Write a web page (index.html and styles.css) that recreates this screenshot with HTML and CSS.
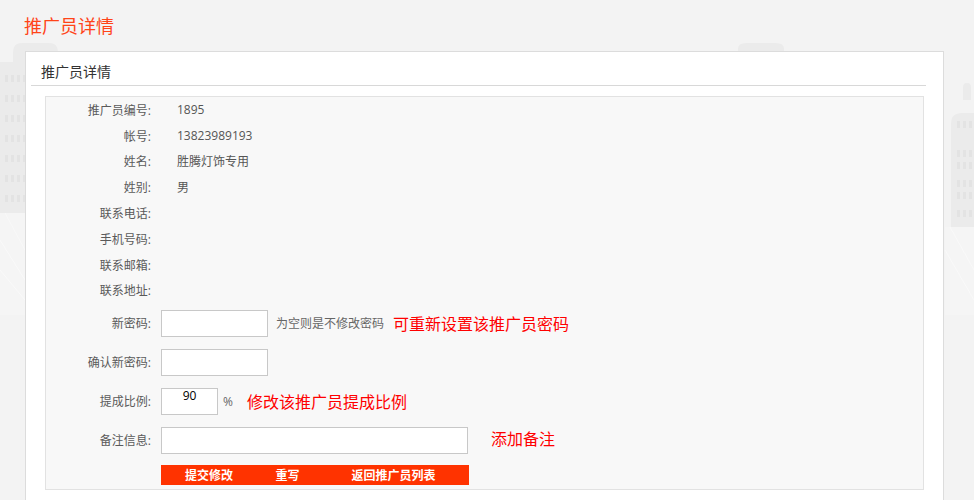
FILE: index.html
```html
<!DOCTYPE html>
<html lang="zh-CN">
<head>
<meta charset="utf-8">
<title>推广员详情</title>
<link rel="stylesheet" href="styles.css">
</head>
<body>
<svg class="bg" width="974" height="500" viewBox="0 0 974 500" aria-hidden="true">
  <g fill="#f5f5f5">
    <path d="M0 213 L60 213 L60 315 L0 315 Z"/>
    <path d="M945 227 L974 227 L974 315 L945 315 Z"/>
  </g>
  <g stroke="#f9f9f9" stroke-width="1" fill="none">
    <path d="M0 240 L25 280 M0 270 L25 300 M5 213 L25 250"/>
    <path d="M945 250 L974 300 M950 227 L974 270"/>
  </g>
  <g fill="#ebebeb">
    <path d="M13 62 L13 52 Q13 43 22 43 L49 43 Q58 43 58 52 L58 62 Z"/>
    <path d="M0 62 L30 62 L30 213 L0 213 Z"/>
    <path d="M738 51 L738 49 Q738 43 746 43 L776 43 Q784 43 784 49 L784 51 Z"/>
    <path d="M963 100 L963 87 Q963 83 967 83 Q971 83 971 87 L971 100 Z"/>
    <path d="M951 227 L951 124 Q951 113 962 113 L974 113 L974 227 Z"/>
  </g>
  <g fill="#e3e3e3">
    <rect x="5" y="75" width="3" height="7"/><rect x="11" y="75" width="3" height="7"/><rect x="17" y="75" width="3" height="7"/><rect x="23" y="75" width="2" height="7"/>
    <rect x="5" y="95" width="3" height="7"/><rect x="11" y="95" width="3" height="7"/><rect x="17" y="95" width="3" height="7"/><rect x="23" y="95" width="2" height="7"/>
    <rect x="5" y="115" width="3" height="7"/><rect x="11" y="115" width="3" height="7"/><rect x="17" y="115" width="3" height="7"/><rect x="23" y="115" width="2" height="7"/>
    <rect x="5" y="135" width="3" height="7"/><rect x="11" y="135" width="3" height="7"/><rect x="17" y="135" width="3" height="7"/><rect x="23" y="135" width="2" height="7"/>
    <rect x="5" y="155" width="3" height="7"/><rect x="11" y="155" width="3" height="7"/><rect x="17" y="155" width="3" height="7"/><rect x="23" y="155" width="2" height="7"/>
    <rect x="5" y="175" width="3" height="7"/><rect x="11" y="175" width="3" height="7"/><rect x="17" y="175" width="3" height="7"/><rect x="23" y="175" width="2" height="7"/>
    <rect x="5" y="195" width="3" height="7"/><rect x="11" y="195" width="3" height="7"/><rect x="17" y="195" width="3" height="7"/><rect x="23" y="195" width="2" height="7"/>
    <rect x="957" y="121" width="3" height="7"/><rect x="963" y="121" width="3" height="7"/><rect x="969" y="121" width="3" height="7"/>
    <rect x="957" y="150" width="3" height="7"/><rect x="963" y="150" width="3" height="7"/><rect x="969" y="150" width="3" height="7"/>
    <rect x="957" y="162" width="3" height="7"/><rect x="963" y="162" width="3" height="7"/><rect x="969" y="162" width="3" height="7"/>
    <rect x="957" y="180" width="3" height="7"/><rect x="963" y="180" width="3" height="7"/><rect x="969" y="180" width="3" height="7"/>
    <rect x="957" y="192" width="3" height="7"/><rect x="963" y="192" width="3" height="7"/><rect x="969" y="192" width="3" height="7"/>
    <rect x="957" y="210" width="3" height="7"/><rect x="963" y="210" width="3" height="7"/><rect x="969" y="210" width="3" height="7"/>
  </g>
</svg>
<div class="page">
  <h1 class="title">推广员详情</h1>
  <div class="panel">
    <div class="panel-hd">推广员详情</div>
    <div class="box">
      <div class="info">
        <div class="row"><span class="lbl">推广员编号:</span><span class="val">1895</span></div>
        <div class="row"><span class="lbl">帐号:</span><span class="val">13823989193</span></div>
        <div class="row"><span class="lbl">姓名:</span><span class="val">胜腾灯饰专用</span></div>
        <div class="row"><span class="lbl">姓别:</span><span class="val">男</span></div>
        <div class="row"><span class="lbl">联系电话:</span><span class="val"></span></div>
        <div class="row"><span class="lbl">手机号码:</span><span class="val"></span></div>
        <div class="row"><span class="lbl">联系邮箱:</span><span class="val"></span></div>
        <div class="row"><span class="lbl">联系地址:</span><span class="val"></span></div>
      </div>
      <form class="form">
        <div class="frow">
          <label class="lbl">新密码:</label>
          <input type="password" class="ipt ipt-md">
          <span class="hint">为空则是不修改密码</span>
          <span class="tip tip-pwd">可重新设置该推广员密码</span>
        </div>
        <div class="frow">
          <label class="lbl">确认新密码:</label>
          <input type="password" class="ipt ipt-md">
        </div>
        <div class="frow">
          <label class="lbl">提成比例:</label>
          <input type="text" class="ipt ipt-sm" value="90">
          <span class="pct">%</span>
          <span class="tip tip-rate">修改该推广员提成比例</span>
        </div>
        <div class="frow">
          <label class="lbl">备注信息:</label>
          <input type="text" class="ipt ipt-lg">
          <span class="tip tip-note">添加备注</span>
        </div>
        <div class="btns">
          <button type="submit" class="btn btn-submit">提交修改</button>
          <button type="reset" class="btn btn-reset">重写</button>
          <button type="button" class="btn btn-back">返回推广员列表</button>
        </div>
      </form>
    </div>
  </div>
</div>
</body>
</html>
```
FILE: styles.css
```css
html, body {
  margin: 0;
  padding: 0;
}
body {
  background: #f3f3f3;
  font-family: "Microsoft YaHei", "Open Sans", "Noto Sans CJK SC", sans-serif;
  font-size: 12px;
  color: #555;
  width: 974px;
  height: 500px;
  overflow: hidden;
  position: relative;
}
.bg {
  position: absolute;
  left: 0;
  top: 0;
  z-index: 0;
}
.page {
  position: relative;
  z-index: 1;
}
.title {
  margin: 0;
  padding: 16px 0 0 24px;
  height: 20px;
  line-height: 20px;
  font-size: 18px;
  font-weight: normal;
  color: #ff4418;
}
.panel {
  margin: 15px 0 0 25px;
  width: 907px;
  height: 448px;
  padding: 0 5px;
  background: #fff;
  border: 1px solid #dcdcdc;
  border-bottom: 0;
}
.panel-hd {
  width: 885px;
  height: 27px;
  padding: 6px 0 0 10px;
  line-height: 27px;
  font-size: 14px;
  color: #333;
  border-bottom: 1px solid #d8d8d8;
}
.box {
  margin: 10px 0 0 14px;
  width: 877px;
  padding-bottom: 4px;
  background: #f8f8f8;
  border: 1px solid #e2e2e2;
}
.row {
  display: flex;
  align-items: center;
  height: 25.8px;
}
.lbl {
  width: 105px;
  text-align: right;
  color: #5a5a5a;
  flex: none;
}
.val {
  padding-left: 26px;
  color: #555;
}
.form {
  margin: 0;
  padding-top: 6.6px;
}
.frow {
  display: flex;
  align-items: center;
  height: 27px;
  margin-bottom: 12px;
}
.frow .lbl {
  margin-right: 10px;
}
.ipt {
  box-sizing: border-box;
  height: 27px;
  margin: 0;
  padding: 0 4px;
  border: 1px solid #c8c8c8;
  background: #fff;
  font-family: inherit;
  font-size: 12px;
  color: #000;
  outline: none;
}
.ipt-md { width: 107px; }
.ipt-sm {
  width: 57px;
  text-align: center;
  padding-bottom: 11px;
}
.ipt-lg { width: 307px; }
.hint {
  margin-left: 8px;
  color: #666;
}
.pct {
  margin-left: 5px;
  color: #666;
}
.tip {
  font-size: 16px;
  color: #f00;
}
.tip-pwd { margin-left: 9px; }
.tip-rate { margin-left: 14px; }
.tip-note {
  margin-left: 23px;
  position: relative;
  top: -2px;
}
.btns {
  display: flex;
  margin: -1px 0 0 115px;
  width: 308px;
  height: 20px;
  background: #ff3300;
}
.btn {
  height: 20px;
  margin: 0;
  padding: 0;
  border: 0;
  background: transparent;
  color: #fff;
  font-family: inherit;
  font-size: 12px;
  font-weight: bold;
  cursor: pointer;
}
.btn-submit { width: 96px; }
.btn-reset { width: 61px; }
.btn-back { width: 151px; }
```
